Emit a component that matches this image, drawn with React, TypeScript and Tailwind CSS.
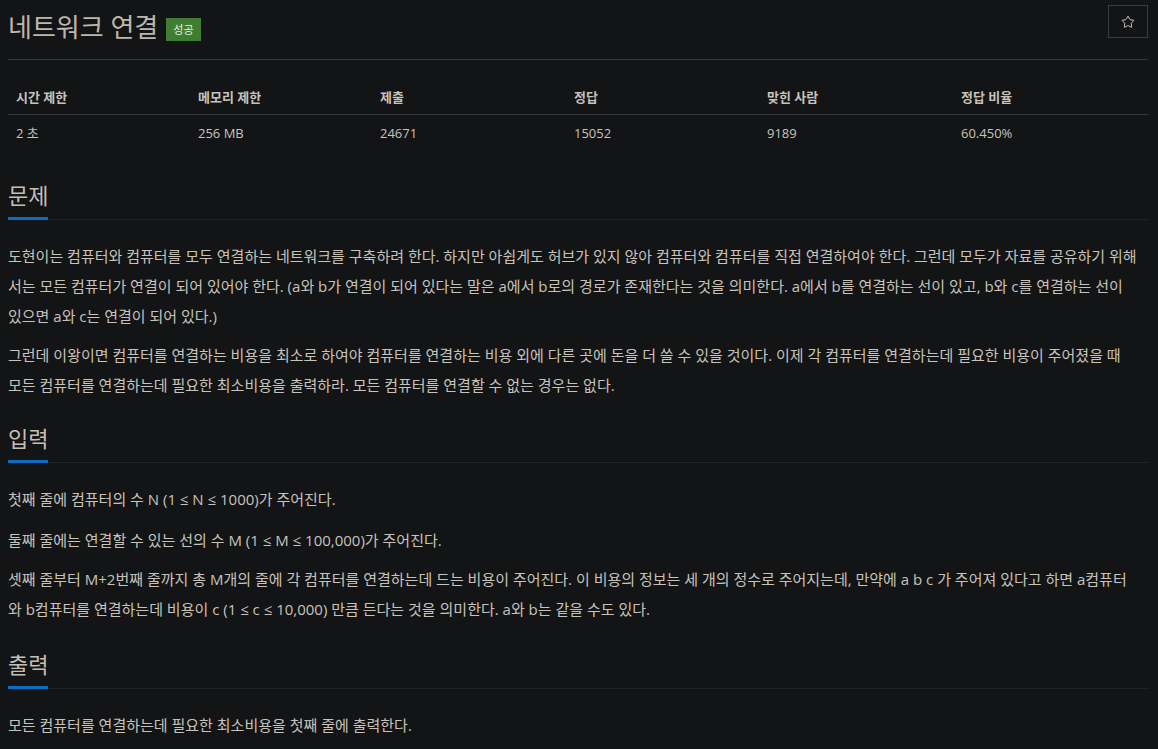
import { Star } from "lucide-react";

const stats = [
    { label: "시간 제한", value: "2 초" },
    { label: "메모리 제한", value: "256 MB" },
    { label: "제출", value: "24671" },
    { label: "정답", value: "15052" },
    { label: "맞힌 사람", value: "9189" },
    { label: "정답 비율", value: "60.450%" },
];

function SectionTitle({ children }: { children: string }) {
    return (
        <div className="mb-[21px] border-b border-dotted border-[#2f3134]">
            <h2 className="inline-block border-b-[3px] border-[#0f6bc4] -mb-px pb-[6px] text-[22px] leading-[32px] text-[#c4bfb6]">
                {children}
            </h2>
        </div>
    );
}

export default function App() {
    return (
        <div
            className="min-h-screen bg-[#131416] pl-2 pr-[10px] text-[#c8c3ba]"
            style={{ fontFamily: '"Open Sans", "Noto Sans CJK KR", sans-serif' }}
        >
            <div className="flex items-start justify-between pt-[5px]">
                <div className="flex items-center gap-2 pt-[4px]">
                    <h1 className="text-[26px] leading-[36px] text-[#bdb7ac]">네트워크 연결</h1>
                    <span className="mt-[4px] bg-[#3f7d32] px-[7px] py-[3px] text-[11px] leading-[17px] text-[#e6efe2]">
                        성공
                    </span>
                </div>
                <button className="flex h-[33px] w-[40px] items-center justify-center border border-[#3a3c40] text-[#d6d2ca]">
                    <Star size={14} strokeWidth={1.6} />
                </button>
            </div>

            <div className="mt-[14px] border-t border-[#36383b]" />

            <div className="mt-[27px] grid grid-cols-[182px_182px_194px_193px_194px_1fr] text-[13px]">
                {stats.map((s) => (
                    <div key={s.label} className="border-b border-[#36383b] px-2 pb-[7px] font-bold leading-[20px] text-[#c8c3ba]">
                        {s.label}
                    </div>
                ))}
                {stats.map((s) => (
                    <div key={s.value} className="px-2 pt-[8px] leading-[20px] text-[#c8c3ba]">
                        {s.value}
                    </div>
                ))}
            </div>

            <div className="mt-[36px]">
                <SectionTitle>문제</SectionTitle>
                <div className="text-[15px] leading-[30px]">
                    <p className="mb-[9px]">
                        도현이는 컴퓨터와 컴퓨터를 모두 연결하는 네트워크를 구축하려 한다. 하지만 아쉽게도 허브가 있지 않아 컴퓨터와 컴퓨터를 직접 연결하여야 한다. 그런데 모두가 자료를 공유하기 위해서는 모든 컴퓨터가 연결이 되어 있어야 한다. (a와 b가 연결이 되어 있다는 말은 a에서 b로의 경로가 존재한다는 것을 의미한다. a에서 b를 연결하는 선이 있고, b와 c를 연결하는 선이
                        <br />
                        있으면 a와 c는 연결이 되어 있다.)
                    </p>
                    <p>
                        그런데 이왕이면 컴퓨터를 연결하는 비용을 최소로 하여야 컴퓨터를 연결하는 비용 외에 다른 곳에 돈을 더 쓸 수 있을 것이다. 이제 각 컴퓨터를 연결하는데 필요한 비용이 주어졌을 때
                        <br />
                        모든 컴퓨터를 연결하는데 필요한 최소비용을 출력하라. 모든 컴퓨터를 연결할 수 없는 경우는 없다.
                    </p>
                </div>
            </div>

            <div className="mt-[22px]">
                <SectionTitle>입력</SectionTitle>
                <div className="text-[15px] leading-[30px]">
                    <p className="mb-[11px]">첫째 줄에 컴퓨터의 수 N (1 ≤ N ≤ 1000)가 주어진다.</p>
                    <p className="mb-[9px]">둘째 줄에는 연결할 수 있는 선의 수 M (1 ≤ M ≤ 100,000)가 주어진다.</p>
                    <p>
                        셋째 줄부터 M+2번째 줄까지 총 M개의 줄에 각 컴퓨터를 연결하는데 드는 비용이 주어진다. 이 비용의 정보는 세 개의 정수로 주어지는데, 만약에 a b c 가 주어져 있다고 하면 a컴퓨터
                        <br />
                        와 b컴퓨터를 연결하는데 비용이 c (1 ≤ c ≤ 10,000) 만큼 든다는 것을 의미한다. a와 b는 같을 수도 있다.
                    </p>
                </div>
            </div>

            <div className="mt-[24px]">
                <SectionTitle>출력</SectionTitle>
                <div className="pb-6 text-[15px] leading-[30px]">
                    <p>모든 컴퓨터를 연결하는데 필요한 최소비용을 첫째 줄에 출력한다.</p>
                </div>
            </div>
        </div>
    );
}
